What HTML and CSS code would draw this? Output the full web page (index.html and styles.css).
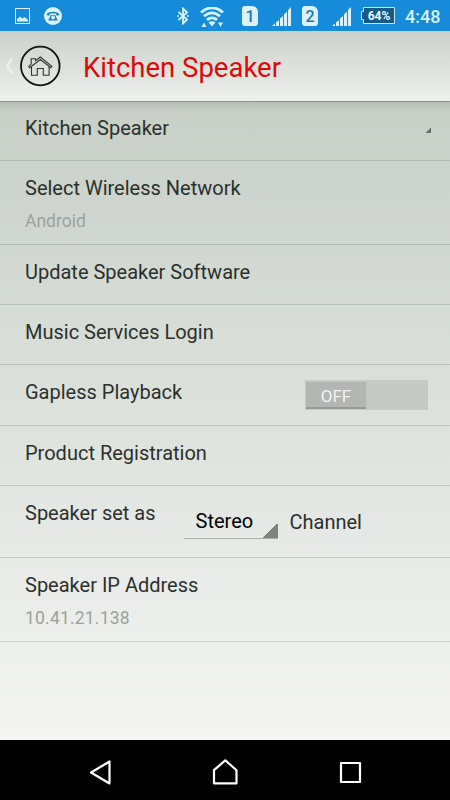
FILE: index.html
```html
<!DOCTYPE html>
<html lang="en">
<head>
    <meta charset="UTF-8">
    <meta name="viewport" content="width=device-width, initial-scale=1.0">
    <title>Kitchen Speaker</title>
    <link rel="stylesheet" href="styles.css">
</head>
<body>
    <div class="status-bar">
        <svg class="icon-picture" width="15" height="16" viewBox="0 0 15 16">
            <rect x=".5" y=".5" width="14" height="15" fill="none" stroke="currentColor"/>
            <path d="M2 13.500V11l3-2.500 2.500 2 2-1.500 3.500 3v1.500z" fill="currentColor"/>
        </svg>
        <svg class="icon-call" width="18" height="18" viewBox="0 0 18 18">
            <circle cx="9" cy="9" r="9" fill="currentColor"/>
            <path d="M2.500 8C3.500 3.800 14.500 3.800 15.500 8L13 8.800 11.700 6.600H6.300L5 8.800z" fill="#1b83c6"/>
            <path d="M6.800 8h4.400l2.600 5.500H4.200z" fill="#1b83c6"/>
            <circle cx="9" cy="10.500" r="2" fill="currentColor"/>
        </svg>
        <svg class="icon-bluetooth" width="12" height="18" viewBox="0 0 12 18">
            <path d="M1.500 5l8.500 7.500L6 16.500v-15l4 4L1.500 13M.2 9h1.500M10 9h1.500" fill="none" stroke="currentColor" stroke-width="1.800"/>
        </svg>
        <svg class="icon-wifi" width="24" height="21" viewBox="0 0 24 21">
            <path d="M1 5.500Q12-4 23 5.500M4 9.300Q12 2.500 20 9.300M7 12.800Q12 9 17 12.800" fill="none" stroke="currentColor" stroke-width="2.800"/>
            <path d="M8.500 15.500Q12 13 15.500 15.500L12 19.500zM1.500 20L4 15.500 6.500 20zM18 15.500h5L20.500 20z" fill="currentColor"/>
        </svg>
        <span class="sim sim-first">1</span>
        <svg class="icon-signal" width="19" height="20" viewBox="0 0 19 20">
            <path d="M0 19L3 16.500V19zM4 15.500l3-2.500v6H4zM8 11.500L11 9v10H8zM12 7.500L15 4.500V19h-3zM16 3l3-3v19h-3z" fill="currentColor"/>
        </svg>
        <span class="sim">2</span>
        <svg class="icon-signal" width="19" height="20" viewBox="0 0 19 20">
            <path d="M0 19L3 16.500V19zM4 15.500l3-2.500v6H4zM8 11.500L11 9v10H8zM12 7.500L15 4.500V19h-3zM16 3l3-3v19h-3z" fill="currentColor"/>
        </svg>
        <div class="battery">
            <svg width="34" height="18" viewBox="0 0 34 18">
                <path d="M2.500.5h31v16h-31v-4h-2v-8h2z" fill="#155a88" stroke="#c5e6ee"/>
            </svg>
            <span class="battery-level">64%</span>
        </div>
        <span class="clock">4:48</span>
    </div>

    <div class="header">
        <svg class="icon-back" width="9" height="18" viewBox="0 0 9 18">
            <path d="M7 1.500L2 9l5 7.500" fill="none" stroke="currentColor" stroke-width="2.500"/>
        </svg>
        <svg class="icon-house" width="42" height="42" viewBox="0 0 42 42">
            <circle cx="21.300" cy="21" r="19.300" fill="none" stroke="#111" stroke-width="1.800"/>
            <path d="M10.700 22.800L21.300 14.500l10.600 8.300 1-1.500L21.300 12l-4.800 3.700v-2h-4.300v5.400l-2.500 2.200zM12.500 21.300v9h5.800v-6.800h6v6.800h5.800v-9" fill="none" stroke="#333" stroke-width="1.100"/>
        </svg>
        <h1>Kitchen Speaker</h1>
    </div>

    <div class="settings">
        <div class="row row-first">
            <span class="title">Kitchen Speaker</span>
            <span class="row-corner"></span>
        </div>
        <div class="row row-double">
            <div>
                <div class="title">Select Wireless Network</div>
                <div class="subtitle">Android</div>
            </div>
        </div>
        <div class="row"><span class="title">Update Speaker Software</span></div>
        <div class="row"><span class="title">Music Services Login</span></div>
        <div class="row row-gapless">
            <span class="title">Gapless Playback</span>
            <div class="switch"><span class="switch-thumb">OFF</span></div>
        </div>
        <div class="row"><span class="title">Product Registration</span></div>
        <div class="row row-channel">
            <span class="title">Speaker set as</span>
            <div class="spinner">Stereo</div>
            <span class="title channel">Channel</span>
        </div>
        <div class="row row-double">
            <div>
                <div class="title">Speaker IP Address</div>
                <div class="subtitle subtitle-ip">10.41.21.138</div>
            </div>
        </div>
    </div>

    <div class="nav-bar">
        <svg width="26" height="28" viewBox="0 0 26 28">
            <path d="M22.500 3.500v22L4 14.500z" fill="none" stroke="currentColor" stroke-width="2.200" stroke-linejoin="round"/>
        </svg>
        <svg width="26" height="28" viewBox="0 0 26 28">
            <path d="M2 25.300V12.200L13.300 2.300l11.200 9.900v13.100z" fill="none" stroke="currentColor" stroke-width="2.200" stroke-linejoin="round"/>
        </svg>
        <svg width="26" height="28" viewBox="0 0 26 28">
            <rect x="4" y="5" width="19" height="19" fill="none" stroke="currentColor" stroke-width="2.200" stroke-linejoin="round"/>
        </svg>
    </div>
</body>
</html>
```

FILE: styles.css
```css
* {
    box-sizing: border-box;
}

body {
    width: 450px;
    height: 800px;
    margin: 0;
    display: flex;
    flex-direction: column;
    overflow: hidden;
    font-family: Roboto, "Liberation Sans", sans-serif;
    color: #2c302c;
}

svg {
    display: block;
    flex: none;
}

.status-bar {
    height: 31px;
    flex: none;
    display: flex;
    align-items: flex-start;
    padding: 7px 0 0 15px;
    background: #168bd9;
    color: #d9f2fb;
}

.icon-picture {
    margin-top: 1px;
}

.icon-call {
    margin-left: 14px;
}

.icon-bluetooth {
    margin-left: 115px;
}

.icon-wifi {
    margin-left: 11px;
}

.sim {
    width: 16px;
    height: 20px;
    margin: -1px 0 0 11px;
    border-radius: 3px 6px 3px 3px;
    background: #d9f2fb;
    color: #2275ac;
    font-size: 16px;
    font-weight: 500;
    line-height: 21px;
    text-align: center;
}

.sim-first {
    margin-left: 18px;
}

.icon-signal {
    margin-left: 14px;
}

.battery {
    display: grid;
    width: 34px;
    height: 18px;
    margin-left: 10px;
    flex: none;
}

.battery svg,
.battery-level {
    grid-area: 1 / 1;
}

.battery-level {
    padding-left: 2px;
    color: #e8f8fc;
    font-size: 12px;
    font-weight: 700;
    line-height: 18px;
    text-align: center;
}

.clock {
    margin-left: 10px;
    font-size: 18px;
    font-weight: 500;
    line-height: 19px;
}

.header {
    height: 71px;
    flex: none;
    display: flex;
    align-items: center;
    padding-left: 5px;
    border-bottom: 1px solid #8d968d;
    background: linear-gradient(#cbd1ca, #eef0ec);
}

.icon-back {
    color: #eef0ed;
}

.icon-house {
    margin-left: 5px;
}

.header h1 {
    margin: 3px 0 0 22px;
    color: #dc0a0a;
    font-size: 27.5px;
    font-weight: 400;
    line-height: 32px;
}

.settings {
    flex: 1;
    background: linear-gradient(rgba(150, 156, 146, 0.350), rgba(150, 156, 146, 0) 10px),
        linear-gradient(#c7cfc7, #f4f5f3);
}

.row {
    height: 60px;
    display: flex;
    align-items: flex-start;
    padding: 15px 22px 0 25px;
    border-bottom: 1px solid rgba(115, 130, 115, 0.300);
}

.title {
    font-size: 20px;
    line-height: 24px;
}

.subtitle {
    margin-top: 10px;
    color: #9ca29c;
    font-size: 17.5px;
    line-height: 22px;
}

.subtitle-ip {
    letter-spacing: 0.2px;
}

.row-first {
    height: 59px;
    padding-top: 14px;
}

.row-corner {
    width: 5px;
    height: 6px;
    margin: 11px -3px 0 auto;
    background: linear-gradient(135deg, transparent 50%, #657067 50%);
}

.row-double {
    height: 84px;
}

.row-gapless {
    height: 61px;
}

.switch {
    width: 123px;
    height: 30px;
    margin-left: auto;
    padding: 2px 1px 1px;
    background: #c6cac6;
}

.switch-thumb {
    display: block;
    width: 60px;
    height: 27px;
    border-bottom: 2px solid #969b97;
    background: #b3b6b3;
    color: #f0f3f0;
    font-size: 17px;
    line-height: 29px;
    text-align: center;
}

.row-channel {
    height: 72px;
}

.spinner {
    width: 94px;
    height: 34px;
    margin: 4px 0 0 28px;
    padding: 4px 12px 0;
    border-bottom: 1px solid #a9aea9;
    background: linear-gradient(135deg, transparent 50%, #7e837f 50%) right bottom / 15px 15px no-repeat;
    color: #000;
    font-size: 20px;
    line-height: 24px;
}

.channel {
    margin: 9px 0 0 12px;
}

.nav-bar {
    height: 60px;
    flex: none;
    display: flex;
    justify-content: space-between;
    align-items: center;
    padding: 4px 87px 0;
    background: #000;
    color: #fff;
}
```
